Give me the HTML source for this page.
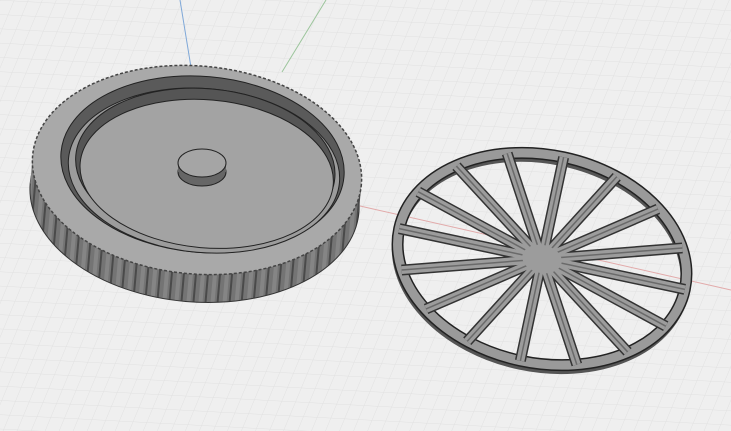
<!DOCTYPE html>
<html><head><style>html,body{margin:0;padding:0;background:#efefef;overflow:hidden}svg{display:block}</style></head>
<body>
<svg width="731" height="431" viewBox="0 0 731 431" xmlns="http://www.w3.org/2000/svg">
<defs>
<pattern id="g" width="14" height="14" patternUnits="userSpaceOnUse" patternTransform="skewX(-20) rotate(3)">
<rect width="14" height="14" fill="#efefef"/>
<path d="M0 0H14M0 0V14" stroke="#e0e0e0" stroke-width="1"/>
</pattern>
<pattern id="st" width="12" height="40" patternUnits="userSpaceOnUse">
<rect width="12" height="40" fill="#747474"/>
<rect x="0" width="2" height="40" fill="#4a4a4a"/>
<rect x="6" width="4" height="40" fill="#858585"/>
</pattern>
</defs>
<rect width="731" height="431" fill="url(#g)"/>
<line x1="180" y1="0" x2="207" y2="165" stroke="#7fa8d8" stroke-width="1"/>
<line x1="326" y1="0" x2="282" y2="72" stroke="#9cc59c" stroke-width="1"/>
<line x1="360" y1="206" x2="731" y2="290" stroke="#e2aaaa" stroke-width="1"/>
<!-- lid -->
<g transform="rotate(5 197 170)">
<ellipse cx="197" cy="198" rx="165" ry="104" fill="url(#st)" stroke="#333" stroke-width="1"/>
<rect x="32" y="170" width="330" height="28" fill="url(#st)"/>
<ellipse cx="197" cy="170" rx="165" ry="104" fill="#a9a9a9" stroke="#444" stroke-width="1.5" stroke-dasharray="3 2"/>
<ellipse cx="202" cy="164" rx="142" ry="88" fill="#5a5a5a" stroke="#222"/>
<ellipse cx="204" cy="170" rx="136" ry="82" fill="#9c9c9c" stroke="#222"/>
<ellipse cx="205" cy="166" rx="130" ry="78" fill="#555" stroke="#222"/>
<ellipse cx="207" cy="173" rx="127" ry="74" fill="#a3a3a3" stroke="#222"/>
</g>
<ellipse cx="202" cy="172" rx="24" ry="14" fill="#666" stroke="#222"/>
<rect x="178" y="163" width="48" height="9" fill="#666"/>
<ellipse cx="202" cy="163" rx="24" ry="14" fill="#a5a5a5" stroke="#222"/>
<!-- wheel -->
<g transform="rotate(12 542 259)">
<ellipse cx="542" cy="263" rx="146" ry="104" fill="none" stroke="#555" stroke-width="10"/>
<ellipse cx="542" cy="259" rx="146" ry="104" fill="none" stroke="#222" stroke-width="12"/>
<ellipse cx="542" cy="259" rx="146" ry="104" fill="none" stroke="#9a9a9a" stroke-width="9"/>
<g stroke-linecap="butt">
<g stroke="#333" stroke-width="11">
<line x1="396" y1="259" x2="688" y2="259"/><line x1="542" y1="155" x2="542" y2="363"/>
<line x1="439" y1="186" x2="645" y2="332"/><line x1="439" y1="332" x2="645" y2="186"/>
<line x1="407" y1="219" x2="677" y2="299"/><line x1="407" y1="299" x2="677" y2="219"/>
<line x1="486" y1="163" x2="598" y2="355"/><line x1="486" y1="355" x2="598" y2="163"/>
</g>
<g stroke="#9c9c9c" stroke-width="8">
<line x1="396" y1="259" x2="688" y2="259"/><line x1="542" y1="155" x2="542" y2="363"/>
<line x1="439" y1="186" x2="645" y2="332"/><line x1="439" y1="332" x2="645" y2="186"/>
<line x1="407" y1="219" x2="677" y2="299"/><line x1="407" y1="299" x2="677" y2="219"/>
<line x1="486" y1="163" x2="598" y2="355"/><line x1="486" y1="355" x2="598" y2="163"/>
</g>
<g stroke="#6a6a6a" stroke-width="1.5">
<line x1="396" y1="259" x2="688" y2="259"/><line x1="542" y1="155" x2="542" y2="363"/>
<line x1="439" y1="186" x2="645" y2="332"/><line x1="439" y1="332" x2="645" y2="186"/>
<line x1="407" y1="219" x2="677" y2="299"/><line x1="407" y1="299" x2="677" y2="219"/>
<line x1="486" y1="163" x2="598" y2="355"/><line x1="486" y1="355" x2="598" y2="163"/>
</g>
</g>
<ellipse cx="542" cy="259" rx="20" ry="14" fill="#9c9c9c"/>
</g>
</svg>
</body></html>
